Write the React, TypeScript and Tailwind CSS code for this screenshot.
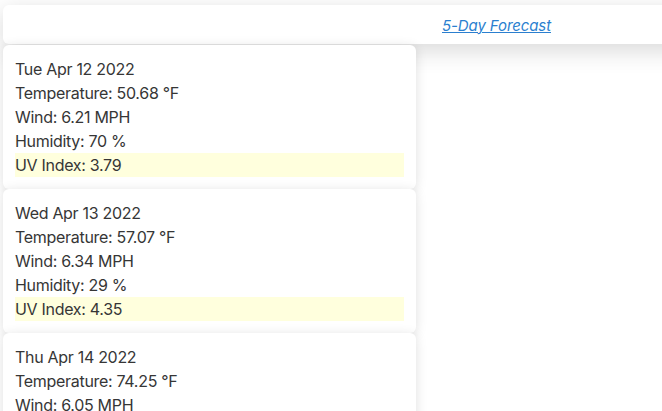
import React from "react";

const days = [
  { date: "Tue Apr 12 2022", temp: "50.68", wind: "6.21", hum: "70", uv: "3.79" },
  { date: "Wed Apr 13 2022", temp: "57.07", wind: "6.34", hum: "29", uv: "4.35" },
  { date: "Thu Apr 14 2022", temp: "74.25", wind: "6.05", hum: "35", uv: "5.10" },
];

export default function App() {
  return (
    <div
      className="h-[411px] w-[662px] overflow-hidden bg-white text-[#363636]"
      style={{ fontFamily: "Inter, 'Noto Sans', sans-serif" }}
    >
      <div className="pl-[3px] pt-[5px]">
        <div className="flex h-[39px] w-[700px] items-center rounded-[6px] bg-white pl-[439px] pt-[3px] shadow-[0_6px_24px_rgba(0,0,0,0.16)]">
          <a href="#" className="text-[15px] italic tracking-[-0.1px] text-[#2b7fcf] underline">
            5-Day Forecast
          </a>
        </div>
        <div className="flex w-[413px] flex-col pt-px">
          {days.map((d) => (
            <div
              key={d.date}
              className="rounded-[6px] bg-white px-3 py-3 text-[16px] leading-6 tracking-[-0.3px] shadow-[0_2px_12px_rgba(0,0,0,0.13)]"
            >
              <div>{d.date}</div>
              <div>Temperature: {d.temp} °F</div>
              <div>Wind: {d.wind} MPH</div>
              <div>Humidity: {d.hum} %</div>
              <div className="bg-[#ffffdd]">UV Index: {d.uv}</div>
            </div>
          ))}
        </div>
      </div>
    </div>
  );
}
